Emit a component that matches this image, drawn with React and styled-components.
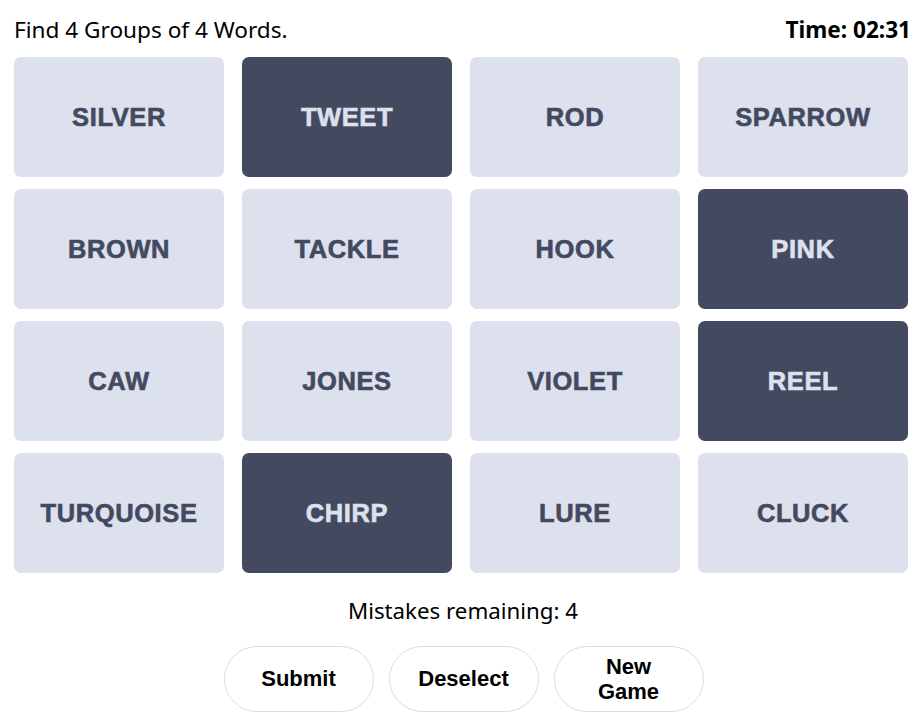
import React, { useState } from 'react';
import styled, { createGlobalStyle } from 'styled-components';

const GlobalStyle = createGlobalStyle`
  body {
    margin: 0;
    background: #fff;
    font-family: "Noto Sans", "Open Sans", sans-serif;
  }
`;

const Page = styled.div`
  width: 917px;
  padding: 14px 6px 0 14px;
  box-sizing: border-box;
`;

const Header = styled.div`
  display: flex;
  justify-content: space-between;
  align-items: center;
  height: 30px;
  font-size: 22.6px;
  color: #000;
`;

const Timer = styled.span`
  font-weight: 700;
`;

const Board = styled.div`
  display: grid;
  grid-template-columns: repeat(4, 210px);
  grid-auto-rows: 120px;
  column-gap: 18px;
  row-gap: 12px;
  margin-top: 13px;
`;

const Tile = styled.button`
  border: none;
  border-radius: 7px;
  background: ${p => (p.selected ? '#434a5f' : '#dde0ed')};
  color: ${p => (p.selected ? '#dde0ed' : '#434a5f')};
  -webkit-text-stroke: 0.6px ${p => (p.selected ? '#dde0ed' : '#434a5f')};
  font-family: "Liberation Sans", Arial, sans-serif;
  font-weight: 700;
  font-size: 25.5px;
  letter-spacing: 0.6px;
  text-transform: uppercase;
  cursor: pointer;
  padding: 0;
`;

const Status = styled.div`
  text-align: center;
  font-size: 22.3px;
  margin-top: 22px;
  padding-left: 1px;
`;

const Actions = styled.div`
  display: flex;
  justify-content: center;
  gap: 15px;
  margin-top: 20px;
  padding-left: 2px;
`;

const ActionButton = styled.button`
  display: flex;
  align-items: center;
  justify-content: center;
  text-align: center;
  width: 150px;
  height: 66px;
  border: 1px solid #d8dce6;
  border-radius: 33px;
  background: #fff;
  color: #000;
  font-family: "Liberation Sans", Arial, sans-serif;
  font-weight: 700;
  font-size: 22px;
  line-height: 1.15;
  padding: 0 38px;
  cursor: pointer;
`;

const words = [
  ['SILVER', false], ['TWEET', true], ['ROD', false], ['SPARROW', false],
  ['BROWN', false], ['TACKLE', false], ['HOOK', false], ['PINK', true],
  ['CAW', false], ['JONES', false], ['VIOLET', false], ['REEL', true],
  ['TURQUOISE', false], ['CHIRP', true], ['LURE', false], ['CLUCK', false],
];

export default function App() {
  const [selected, setSelected] = useState(
    words.filter(w => w[1]).map(w => w[0])
  );

  const toggle = (word) => {
    setSelected(selected.includes(word)
      ? selected.filter(w => w !== word)
      : [...selected, word]);
  };

  return (
    <Page>
      <GlobalStyle />
      <Header>
        <span>Find 4 Groups of 4 Words.</span>
        <Timer>Time: 02:31</Timer>
      </Header>
      <Board>
        {words.map(([word]) => (
          <Tile key={word} selected={selected.includes(word)} onClick={() => toggle(word)}>
            {word}
          </Tile>
        ))}
      </Board>
      <Status>Mistakes remaining: 4</Status>
      <Actions>
        <ActionButton>Submit</ActionButton>
        <ActionButton>Deselect</ActionButton>
        <ActionButton>New Game</ActionButton>
      </Actions>
    </Page>
  );
}
